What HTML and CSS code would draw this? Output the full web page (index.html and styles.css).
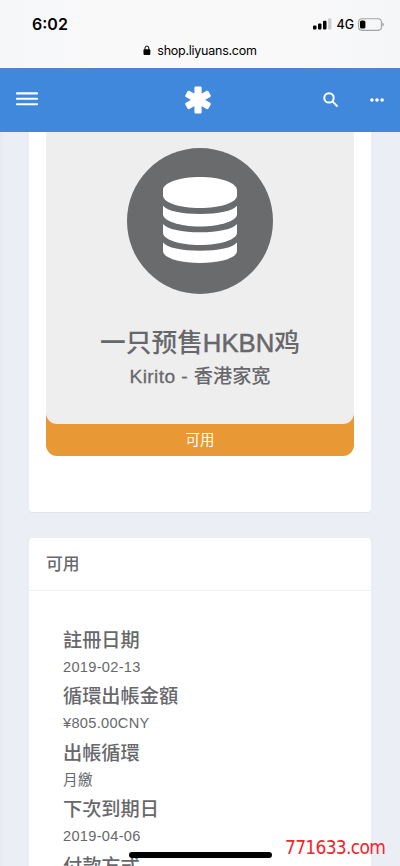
FILE: index.html
```html
<!DOCTYPE html>
<html lang="zh-Hant">
<head>
<meta charset="utf-8">
<meta name="viewport" content="width=device-width, initial-scale=1">
<title>shop.liyuans.com</title>
<link rel="stylesheet" href="styles.css">
</head>
<body>
<div class="browser">
  <div class="status">
    <span class="clock">6:02</span>
    <div class="indicators">
      <svg class="signal" width="19" height="12" viewBox="0 0 19 12"><rect x="0" y="7.5" width="3.5" height="4" rx="1"/><rect x="5" y="5.5" width="3.5" height="6" rx="1"/><rect x="10" y="2.7" width="3.5" height="8.8" rx="1"/><rect x="15" y="0.3" width="3.5" height="11.2" rx="1" fill="#cdcdcf"/></svg>
      <span class="network">4G</span>
      <svg class="battery" width="27" height="13" viewBox="0 0 27 13"><rect x=".6" y=".8" width="22.8" height="11.6" rx="3.3" fill="none" stroke="#a2a2a3" stroke-width="1.1"/><rect x="2" y="2.5" width="5.4" height="8" rx="1.6"/><path d="M24.4 4.5q1.5.7 1.5 2.1t-1.5 2.1z" fill="#a2a2a3"/></svg>
    </div>
  </div>
  <div class="address">
    <svg width="8" height="11" viewBox="0 0 8 11"><rect x=".5" y="4.2" width="6.8" height="5.8" rx="1"/><path d="M2 4.7V3a1.9 1.9 0 0 1 3.8 0v1.7" fill="none" stroke="#000" stroke-width="1"/></svg>
    <span>shop.liyuans.com</span>
  </div>
</div>
<header class="navbar">
  <svg class="menu" width="22" height="14" viewBox="0 0 22 14"><path d="M.9 1.4h20.2M.9 6.8h20.2M.9 12.2h20.2"/></svg>
  <svg class="brand" width="28" height="28" viewBox="0 0 28 28"><path d="M11.700 1.700h4.600v24.600h-4.600zM2.500 9.900l2.200-3.900 20.800 12-2.200 3.900zM25.500 9.900l-2.200-3.900-20.800 12 2.200 3.900z"/></svg>
  <svg class="search" width="16" height="16" viewBox="0 0 16 16"><circle cx="6" cy="5.900" r="4.700"/><path d="M9.400 9.400l5.100 5.100"/></svg>
  <svg class="more" width="14" height="4" viewBox="0 0 14 4"><circle cx="1.9" cy="2" r="1.8"/><circle cx="7" cy="2" r="1.8"/><circle cx="12.1" cy="2" r="1.8"/></svg>
</header>
<main class="content">
  <section class="card product-card">
    <div class="product">
      <div class="summary">
        <div class="disc">
          <svg width="74" height="86" viewBox="0 0 74 86"><path d="M0 13C0 5.800 16.500 0 37 0s37 5.800 37 13v5.500C74 25.500 57.500 31 37 31S0 25.500 0 18.500zM0 28.800C4 34 19 37 37 37s33-3 37-8.200v8.500C74 44 57.500 49.500 37 49.500S0 44 0 37.300zM0 47c4 5.200 19 8.300 37 8.300S70 52.200 74 47v8.700C74 62.500 57.500 68 37 68S0 62.500 0 55.700zM0 65.600c4 5.200 19 8.200 37 8.200s33-3 37-8.200v8.500C74 80.800 57.500 86 37 86S0 80.800 0 74.100z"/></svg>
        </div>
        <h1 class="name">一只预售<span class="latin">HKBN</span>鸡</h1>
        <h2 class="group"><span class="latin">Kirito - </span>香港家宽</h2>
      </div>
      <div class="state">可用</div>
    </div>
  </section>
  <section class="card details">
    <h3 class="title">可用</h3>
    <dl class="facts">
      <dt>註冊日期</dt><dd>2019-02-13</dd>
      <dt>循環出帳金額</dt><dd>¥805.00CNY</dd>
      <dt>出帳循環</dt><dd>月繳</dd>
      <dt>下次到期日</dt><dd>2019-04-06</dd>
      <dt>付款方式</dt>
    </dl>
  </section>
</main>
<div class="home-bar"></div>
<div class="watermark">771633.com</div>
</body>
</html>
```
FILE: styles.css
```css
* { box-sizing: border-box; }
body {
  margin: 0;
  height: 866px;
  overflow: hidden;
  display: flex;
  flex-direction: column;
  position: relative;
  background: linear-gradient(90deg, #e6e8ee 0, #ebeff5 5px, #ebeff5 100%);
  color: #67686b;
  font-family: "Liberation Sans", "Noto Sans CJK SC", sans-serif;
}
h1, h2, h3, dl, dd { margin: 0; font-weight: 500; }
svg { display: block; flex: none; }
.browser {
  flex: none;
  height: 68px;
  background: linear-gradient(90deg, #f6f7f9, #f9f9fa 25%, #f9f9fa 75%, #f5f6f8);
  color: #000;
  font-family: Inter, sans-serif;
}
.status {
  height: 40px;
  padding: 8px 15px 0 32px;
  display: flex;
  align-items: center;
  justify-content: space-between;
}
.clock { font-size: 16px; font-weight: 600; }
.indicators { display: flex; align-items: center; }
.network { margin: 0 4px 0 4.500px; font-size: 12.500px; font-weight: 500; }
.address {
  height: 20px;
  display: flex;
  align-items: center;
  justify-content: center;
  gap: 6px;
  font-size: 12.500px;
  letter-spacing: -.25px;
}
.navbar {
  flex: none;
  height: 64px;
  display: flex;
  align-items: center;
  padding: 0 16px 1px;
  background: #4088dc;
  border-top: 1px solid #5084c4;
  fill: none;
  stroke: #fff;
}
.menu { stroke-width: 2.100; stroke-linecap: round; margin-bottom: 2px; }
.brand { margin-left: 146px; fill: #fff; stroke-width: 2.600; stroke-linejoin: round; }
.search { margin-left: 111px; stroke-width: 2; }
.more { margin-left: 31px; fill: #fff; stroke: none; }
.content {
  flex: 1;
  min-height: 0;
  overflow: hidden;
  padding: 0 29px;
}
.card { background: #fff; border-radius: 4px; box-shadow: 0 1px 1px #dfe2e8; }
.product-card {
  height: 379.500px;
  padding: 0 17px;
  border-radius: 0 0 4px 4px;
}
.product { background: #e89936; border-radius: 0 0 11px 11px; text-align: center; }
.summary {
  height: 292px;
  padding-top: 15.600px;
  background: #eee;
  border-radius: 0 0 11px 11px;
}
.disc {
  width: 146px;
  height: 146px;
  margin: 0 auto;
  display: grid;
  place-items: center;
  border-radius: 50%;
  background: #6a6b6d;
  fill: #fff;
}
.disc svg { margin-bottom: 1px; }
.name {
  margin-top: 31.400px;
  font-size: 25.700px;
  line-height: 36px;
}
.latin { -webkit-text-stroke: .5px currentColor; }
.group {
  margin-top: 2px;
  font-size: 19.200px;
  line-height: 28px;
}
.group .latin { letter-spacing: .4px; -webkit-text-stroke-width: .3px; }
.state { height: 32px; line-height: 33px; font-size: 14.500px; color: #fff; }
.details { height: 420px; margin-top: 26px; }
.title {
  height: 53px;
  padding-left: 17px;
  border-bottom: 1px solid #f0f1f3;
  font-size: 16.800px;
  line-height: 53px;
}
.facts { padding: 34.500px 34px 0; }
.facts dt {
  height: 31px;
  line-height: 31px;
  font-size: 19.200px;
  font-weight: 500;
}
.facts dd {
  height: 25.400px;
  line-height: 22px;
  font-size: 14.600px;
  font-weight: 400;
  letter-spacing: .3px;
}
.home-bar {
  position: absolute;
  left: 129px;
  bottom: 8.500px;
  width: 143px;
  height: 5.500px;
  border-radius: 3px;
  background: #000;
}
.watermark {
  position: absolute;
  left: 285px;
  bottom: 6px;
  color: #fb202b;
  font: 19px/26px "DejaVu Sans Condensed", "DejaVu Sans", sans-serif;
  font-stretch: condensed;
  letter-spacing: -.7px;
}
```
